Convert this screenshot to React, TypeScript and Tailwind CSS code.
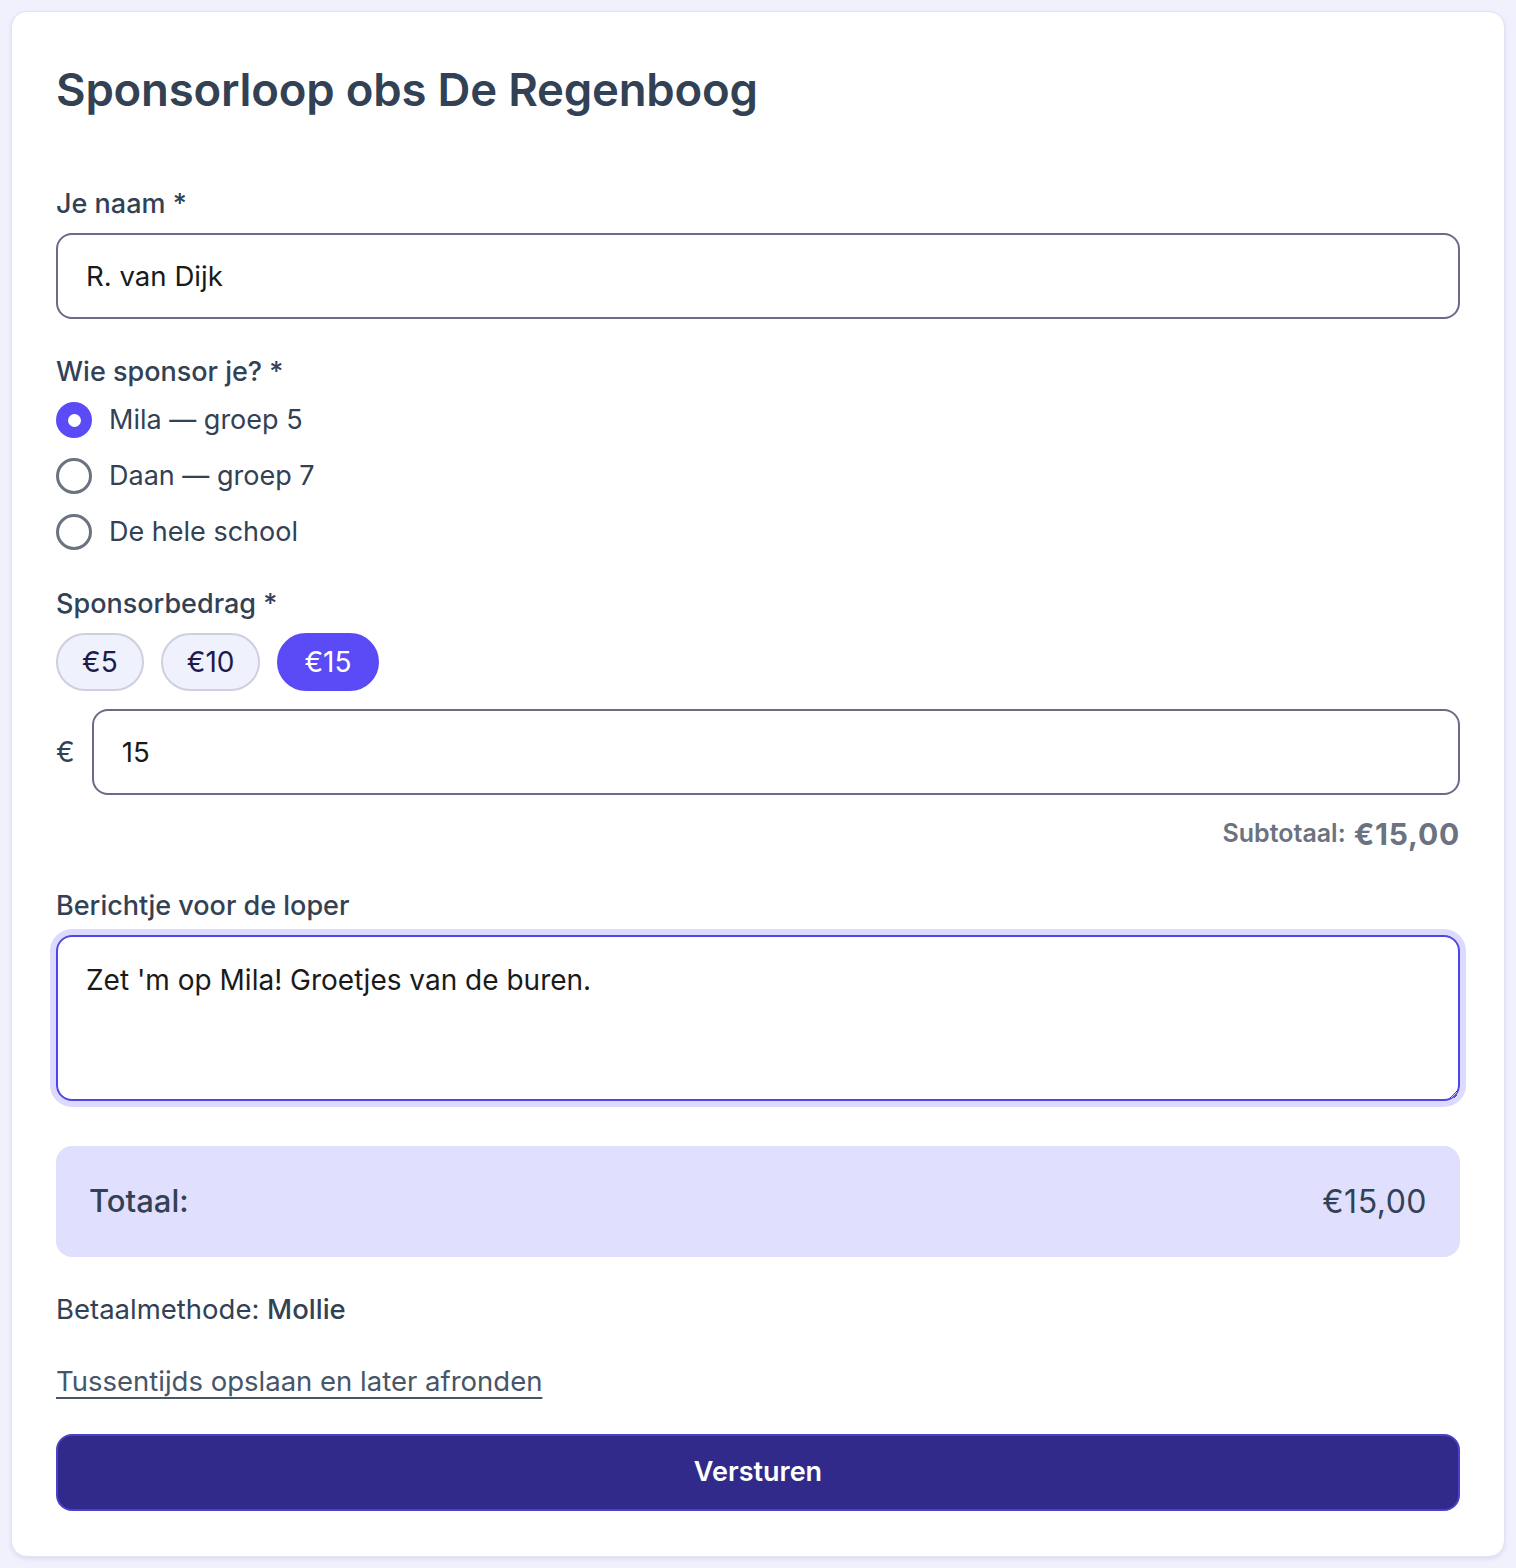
import { useState } from 'react';

const amounts = [5, 10, 15];

const runners = ['Mila — groep 5', 'Daan — groep 7', 'De hele school'];

function Label({ children }: { children: React.ReactNode }) {
  return <div className="h-9 flex items-center text-[27px] font-medium text-[#334155]">{children}</div>;
}

export default function App() {
  const [name, setName] = useState('R. van Dijk');
  const [runner, setRunner] = useState(0);
  const [amount, setAmount] = useState('15');
  const [message, setMessage] = useState("Zet 'm op Mila! Groetjes van de buren.");

  const total = (parseFloat(amount) || 0).toFixed(2).replace('.', ',');

  return (
    <div className="min-h-screen bg-[#f1f0fd] pt-[11px] pb-[11px] px-[11px] font-['Inter',_'Noto_Sans',sans-serif]">
      <div className="bg-white rounded-2xl border border-[#e3e1f5] shadow-[0_2px_4px_rgba(80,70,160,0.12)] px-11 pt-[49px] pb-[45px]">
        <h1 className="text-[45.5px] leading-[58px] font-semibold text-[#334155] tracking-[-0.2px]">Sponsorloop obs De Regenboog</h1>

        <div className="mt-[67px]">
          <Label>Je naam *</Label>
          <input
            value={name}
            onChange={(e) => setName(e.target.value)}
            className="mt-[11px] w-full h-[86px] rounded-2xl border-2 border-[#6c6b87] px-7 text-[27.6px] text-[#1a1a1a] outline-none"
          />
        </div>

        <div className="mt-[35px]">
          <Label>Wie sponsor je? *</Label>
          <div className="mt-[2px] flex flex-col">
            {runners.map((r, i) => (
              <label key={r} className="h-14 flex items-center gap-[17px] cursor-pointer" onClick={() => setRunner(i)}>
                {runner === i ? (
                  <span className="w-9 h-9 rounded-full bg-[#5b4bf6] flex items-center justify-center">
                    <span className="w-[13px] h-[13px] rounded-full bg-white" />
                  </span>
                ) : (
                  <span className="w-9 h-9 rounded-full border-[3.5px] border-[#6b7280] bg-white" />
                )}
                <span className="text-[27px] text-[#334155]">{r}</span>
              </label>
            ))}
          </div>
        </div>

        <div className="mt-[26px]">
          <Label>Sponsorbedrag *</Label>
          <div className="mt-[11px] flex gap-[17px]">
            {amounts.map((a) => {
              const active = amount === String(a);
              return (
                <button
                  key={a}
                  onClick={() => setAmount(String(a))}
                  className={
                    active
                      ? 'h-[58px] px-[25px] rounded-full border-2 border-[#5b4bf6] bg-[#5b4bf6] text-white text-[28px]'
                      : 'h-[58px] px-[24px] rounded-full border-2 border-[#cfcfe0] bg-[#eff1fd] text-[#1e1b4b] text-[28px]'
                  }
                >
                  €{a}
                </button>
              );
            })}
          </div>
          <div className="mt-[18px] flex items-center gap-[17px]">
            <span className="text-[28px] text-[#334155]">€</span>
            <input
              value={amount}
              onChange={(e) => setAmount(e.target.value)}
              className="flex-1 h-[86px] rounded-2xl border-2 border-[#6c6b87] px-7 text-[27.6px] text-[#1a1a1a] outline-none"
            />
          </div>
          <div className="mt-[21px] h-9 flex items-center justify-end gap-2 text-[#6b7280]">
            <span className="text-[25px] font-semibold">Subtotaal:</span>
            <span className="text-[30px] font-bold tracking-[0.8px]">€{total}</span>
          </div>
        </div>

        <div className="mt-9">
          <Label>Berichtje voor de loper</Label>
          <textarea
            value={message}
            onChange={(e) => setMessage(e.target.value)}
            className="mt-[11px] block w-full h-[166px] rounded-2xl border-2 border-[#5046e5] ring-[6px] ring-[#dcdafe] px-7 pt-[22px] text-[28px] text-[#1a1a1a] outline-none"
          />
        </div>

        <div className="mt-[45px] h-[111px] rounded-2xl bg-[#e0dffe] px-[33px] flex items-center justify-between text-[31px] text-[#334155]">
          <span className="font-medium">Totaal:</span>
          <span className="text-[32px] tracking-[0.5px]">€{total}</span>
        </div>

        <div className="mt-[35px] h-9 flex items-center text-[27.5px] text-[#334155]">
          Betaalmethode:&nbsp;<span className="font-medium">Mollie</span>
        </div>

        <div className="mt-9 h-9 flex items-center">
          <a href="#" className="text-[27.5px] text-[#475569] underline underline-offset-[6px] decoration-[2px]">
            Tussentijds opslaan en later afronden
          </a>
        </div>

        <button className="mt-[34px] w-full h-[77px] rounded-2xl bg-[#312a8a] border-2 border-[#4b40c9] text-white text-[27px] font-semibold">
          Versturen
        </button>
      </div>
    </div>
  );
}
